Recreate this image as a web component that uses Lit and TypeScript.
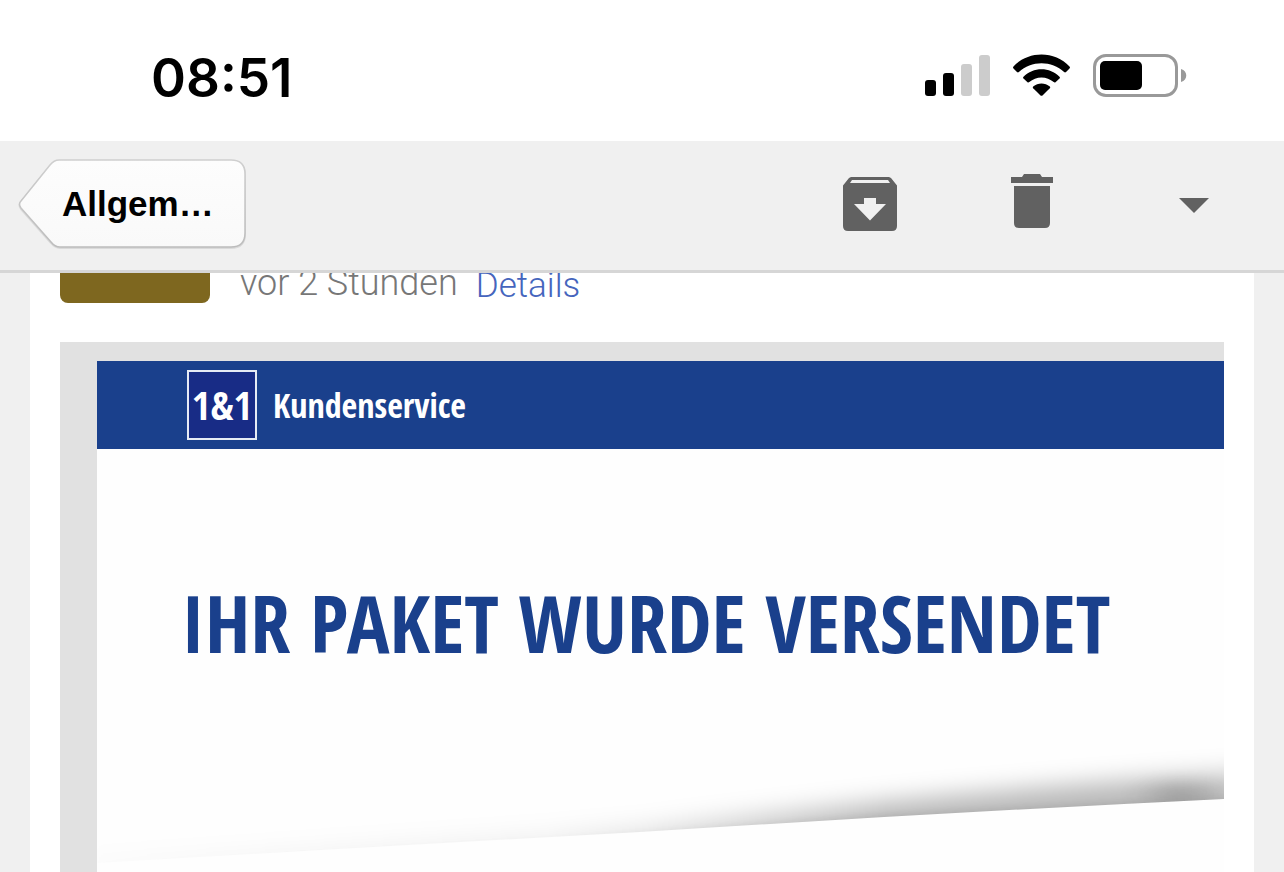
import { LitElement, html, css } from "lit";
import { customElement } from "lit/decorators.js";

@customElement("status-bar")
class StatusBar extends LitElement {
  static styles = css`
    :host {
      display: flex;
      align-items: center;
      justify-content: space-between;
      box-sizing: border-box;
      height: 141px;
      padding: 14px 96px 0 151px;
      background: #fff;
    }
    .time {
      font: 600 53px/64px Inter, sans-serif;
      color: #000;
    }
    .icons {
      display: flex;
      align-items: center;
    }
    svg {
      display: block;
    }
  `;

  render() {
    return html`
      <time class="time" datetime="08:51">08:51</time>
      <div class="icons">
        <svg width="264" height="48" viewBox="0 0 264 48" role="img" aria-label="Signal, WLAN, Akku">
          <rect x="1" y="26" width="11" height="16" rx="3" />
          <rect x="19" y="19" width="11" height="23" rx="3" />
          <rect x="37" y="10" width="11" height="32" rx="3" fill="#ccc" />
          <rect x="55" y="1" width="11" height="41" rx="3" fill="#ccc" />
          <path d="M89.500 12.500C104-3.500 131-3.500 145.500 12.500C146.200 13.300 146.100 13.800 145.500 14.400L142 18C141.300 18.600 140.700 18.500 140.100 17.900C128 6.300 107 6.300 94.900 17.900C94.300 18.500 93.700 18.600 93 18L89.500 14.400C88.900 13.800 88.800 13.300 89.500 12.500Z" />
          <path d="M99.500 22.700C109 12.700 126 12.700 135.500 22.700C136.100 23.300 136.100 24 135.500 24.600L131.500 28.200C130.900 28.700 130.300 28.700 129.700 28.100C123 21.800 112 21.800 105.300 28.100C104.700 28.700 104.100 28.700 103.500 28.200L99.500 24.600C98.900 24 98.900 23.300 99.500 22.700Z" />
          <path d="M109.200 32.500C114 28.400 121 28.400 125.800 32.500C126.400 33.100 126.400 33.700 125.800 34.300L118.500 41.400C117.800 42 117.200 42 116.500 41.400L109.200 34.300C108.600 33.700 108.600 33.100 109.200 32.500Z" />
          <rect x="170.500" y="1.500" width="82" height="40" rx="11.500" fill="none" stroke="#999" stroke-width="3" />
          <rect x="176" y="7" width="42" height="29" rx="5" />
          <path d="M257 15C264 17 264 26 257 28Z" fill="#999" />
        </svg>
      </div>
    `;
  }
}

@customElement("mail-toolbar")
class MailToolbar extends LitElement {
  static styles = css`
    :host {
      display: flex;
      align-items: center;
      justify-content: space-between;
      box-sizing: border-box;
      height: 132px;
      padding: 0 74px 4px 18px;
      background: #f0f0f0;
      border-bottom: 3px solid #d6d6d6;
    }
    button {
      display: block;
      padding: 0;
      border: 0;
      background: none;
      color: #616161;
    }
    .back {
      display: grid;
      width: 228px;
      height: 92px;
      align-items: center;
      justify-items: start;
      color: #000;
      font: 700 35px/44px "Liberation Sans", sans-serif;
    }
    .back > * {
      grid-area: 1 / 1;
    }
    .label {
      padding-left: 44px;
    }
    .actions {
      display: flex;
      gap: 106px;
      align-items: center;
    }
    svg {
      display: block;
    }
  `;

  render() {
    return html`
      <button class="back">
        <svg width="228" height="92" viewBox="0 -1 228 92" aria-hidden="true">
          <defs>
            <linearGradient id="face" x1="0" y1="0" x2="0" y2="1">
              <stop offset="0" stop-color="#fdfdfd" />
              <stop offset="1" stop-color="#f9f9f9" />
            </linearGradient>
            <linearGradient id="edge" x1="0" y1="0" x2="0" y2="1">
              <stop offset="0" stop-color="#cfcfcf" />
              <stop offset="1" stop-color="#bcbcbc" />
            </linearGradient>
          </defs>
          <path d="M41 2H213Q227 2 227 16V75Q227 89 213 89H42Q37 89 33 84L3 50Q0 46 3 43L32 7Q36 2 41 2Z" fill="none" stroke="#dadada" stroke-width="2" />
          <path d="M41 1H213Q227 1 227 15V74Q227 88 213 88H42Q37 88 33 83L3 49Q0 45 3 42L32 6Q36 1 41 1Z" fill="url(#face)" stroke="url(#edge)" stroke-width="1.500" />
        </svg>
        <span class="label">Allgem…</span>
      </button>
      <div class="actions">
        <button aria-label="Archivieren">
          <svg width="56" height="56" viewBox="0 0 56 56" fill="currentColor">
            <path fill-rule="evenodd" d="M9 1H47L49 2L55 9.500V50Q55 55 50 55H6Q1 55 1 50V9.500L7 2ZM10 4L8 7H48L46 4ZM22 22V28H12L28 44.500L44 28H34V22Z" />
          </svg>
        </button>
        <button aria-label="Löschen">
          <svg width="56" height="62" viewBox="0 0 56 62" fill="currentColor">
            <path d="M7 4H18L20 1H36L38 4H49V10H7ZM10 13H46V50Q46 55 41 55H15Q10 55 10 50Z" />
          </svg>
        </button>
        <button aria-label="Mehr">
          <svg width="44" height="56" viewBox="0 0 44 56" fill="currentColor">
            <path d="M13 22H43L28 37Z" />
          </svg>
        </button>
      </div>
    `;
  }
}

@customElement("mail-message")
class MailMessage extends LitElement {
  static styles = css`
    :host {
      display: flex;
      flex-direction: column;
      margin: 0 30px;
      padding: 0 30px;
      background: #fff;
      overflow: hidden;
    }
    .meta {
      display: flex;
      height: 30px;
      align-items: flex-end;
    }
    .avatar {
      flex: none;
      width: 150px;
      height: 150px;
      border-radius: 8px;
      background: #7e671f;
    }
    .when,
    .details {
      font: 300 36px/40px Roboto, "Liberation Sans", sans-serif;
      white-space: nowrap;
    }
    .when {
      margin-left: 30px;
      color: #777;
    }
    .details {
      margin-left: 18px;
      color: #4565bd;
      text-decoration: none;
      font-size: 35px;
      line-height: 35px;
    }
    .mail {
      display: flex;
      flex-direction: column;
      flex: 1;
      margin-top: 39px;
      padding: 19px 0 0 37px;
      background: #e1e1e1;
    }
    .brand {
      display: flex;
      align-items: center;
      gap: 16px;
      height: 88px;
      padding-left: 90px;
      background: #1a408c;
      color: #fff;
    }
    .logo {
      display: grid;
      place-items: center;
      box-sizing: border-box;
      width: 70px;
      height: 70px;
      border: 2px solid #e6ebf5;
      background: #182c86;
      font: 700 40px/44px "Open Sans Condensed", "Open Sans", sans-serif;
    }
    .service {
      font: 700 34px/40px "Open Sans Condensed", "Open Sans", sans-serif;
    }
    .hero {
      display: flex;
      flex-direction: column;
      justify-content: space-between;
      flex: 1;
      background: #fefefe;
    }
    h1 {
      margin: 123px 0 0 84px;
      color: #1a408c;
      font: 700 80px/100px "Open Sans Condensed", "Open Sans", sans-serif;
      white-space: nowrap;
    }
    .fold {
      display: block;
      width: 100%;
      height: 132px;
    }
  `;

  render() {
    return html`
      <div class="meta">
        <div class="avatar"></div>
        <span class="when">vor 2 Stunden</span>
        <a class="details" href="#details">Details</a>
      </div>
      <article class="mail">
        <header class="brand">
          <span class="logo">1&amp;1</span>
          <span class="service">Kundenservice</span>
        </header>
        <div class="hero">
          <h1>IHR PAKET WURDE VERSENDET</h1>
          <svg class="fold" viewBox="0 0 1127 132" preserveAspectRatio="none" aria-hidden="true">
            <defs>
              <clipPath id="above"><path d="M0 0H1127V59Q840 73 543 92Q260 108 0 123Z" /></clipPath>
              <linearGradient id="shade" gradientUnits="userSpaceOnUse" x1="0" y1="0" x2="1127" y2="0">
                <stop offset="0" stop-color="#000" stop-opacity="0.030" />
                <stop offset="0.400" stop-color="#000" stop-opacity="0.060" />
                <stop offset="0.520" stop-color="#000" stop-opacity="0.140" />
                <stop offset="0.700" stop-color="#000" stop-opacity="0.270" />
                <stop offset="0.950" stop-color="#000" stop-opacity="0.270" />
                <stop offset="1" stop-color="#000" stop-opacity="0.240" />
              </linearGradient>
              <filter id="soft" x="-10%" y="-80%" width="120%" height="260%"><feGaussianBlur stdDeviation="4 12" /></filter>
              <filter id="tight" x="-10%" y="-80%" width="120%" height="260%"><feGaussianBlur stdDeviation="4 3" /></filter>
              <filter id="spot" x="-100%" y="-200%" width="300%" height="500%"><feGaussianBlur stdDeviation="18 8" /></filter>
            </defs>
            <g clip-path="url(#above)">
              <path filter="url(#soft)" fill="url(#shade)" d="M0 122Q260 106 543 88Q840 52 1160 32V100L543 132H0Z" />
              <path filter="url(#tight)" fill="url(#shade)" opacity="0.250" d="M0 124Q260 109 543 92Q840 70 1160 56V90L543 132H0Z" />
              <ellipse filter="url(#spot)" cx="1085" cy="54" rx="32" ry="12" opacity="0.160" />
            </g>
          </svg>
        </div>
      </article>
    `;
  }
}

@customElement("app-root")
class AppRoot extends LitElement {
  static styles = css`
    :host {
      display: flex;
      flex-direction: column;
      min-height: 100vh;
      background: #f0f0f0;
    }
    .message {
      flex: 1;
    }
  `;

  render() {
    return html`
      <status-bar></status-bar>
      <mail-toolbar></mail-toolbar>
      <mail-message class="message"></mail-message>
    `;
  }
}
